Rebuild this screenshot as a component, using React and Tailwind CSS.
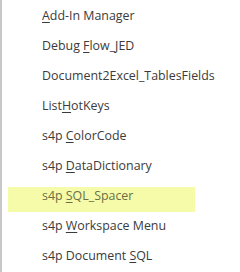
import React from 'react';

const items = [
    { pre: '', key: 'A', post: 'dd-In Manager' },
    { pre: 'Debug ', key: 'F', post: 'low_JED' },
    { pre: 'Document2Excel_TablesFields', key: '', post: '' },
    { pre: 'List', key: 'H', post: 'otKeys' },
    { pre: 's4p ', key: 'C', post: 'olorCode' },
    { pre: 's4p ', key: 'D', post: 'ataDictionary' },
    { pre: 's4p ', key: 'S', post: 'QL_Spacer', active: true },
    { pre: 's4p ', key: 'W', post: 'orkspace Menu' },
    { pre: 's4p Document ', key: 'S', post: 'QL' },
];

const App = () => {
    return (
        <div className="w-[240px] h-[272px] bg-white border-l-2 border-[#c8c8c8] pt-[7px] pl-[6px] font-['Open_Sans',sans-serif] text-[12.4px]">
            <ul className="flex flex-col gap-[5px]">
                {items.map((item, i) => (
                    <li
                        key={i}
                        className={
                            'h-[25px] w-[187px] flex items-center pl-[34px] pb-[6px] whitespace-pre ' +
                            (item.active ? 'bg-[#f5fba9] text-[#6e6e45]' : 'text-[#3b3b3b]')
                        }
                    >
                        <span>
                            {item.pre}
                            {item.key && <span className="underline underline-offset-2">{item.key}</span>}
                            {item.post}
                        </span>
                    </li>
                ))}
            </ul>
        </div>
    );
};

export default App;
